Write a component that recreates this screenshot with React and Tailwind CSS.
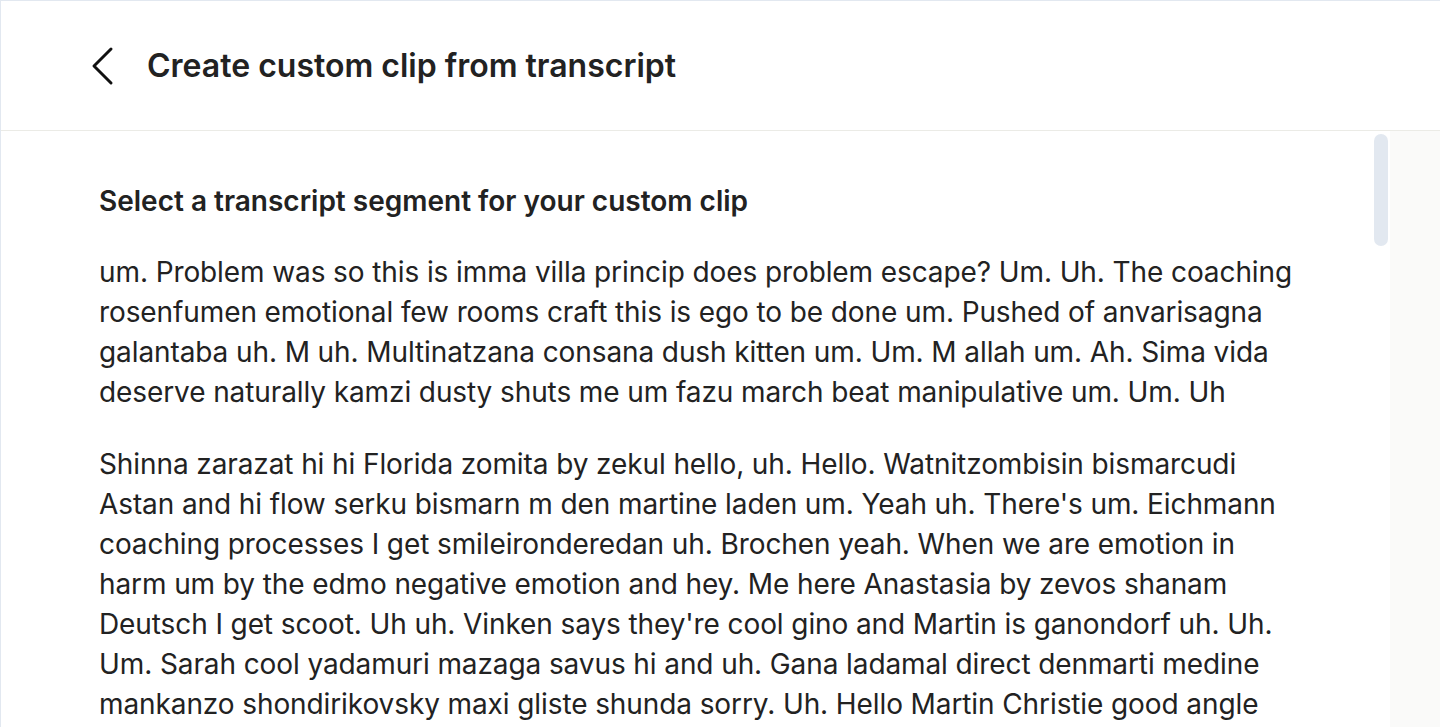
const PARAGRAPHS = [
  "um. Problem was so this is imma villa princip does problem escape? Um. Uh. The coaching rosenfumen emotional few rooms craft this is ego to be done um. Pushed of anvarisagna galantaba uh. M uh. Multinatzana consana dush kitten um. Um. M allah um. Ah. Sima vida deserve naturally kamzi dusty shuts me um fazu march beat manipulative um. Um. Uh",
  "Shinna zarazat hi hi Florida zomita by zekul hello, uh. Hello. Watnitzombisin bismarcudi Astan and hi flow serku bismarn m den martine laden um. Yeah uh. There's um. Eichmann coaching processes I get smileironderedan uh. Brochen yeah. When we are emotion in harm um by the edmo negative emotion and hey. Me here Anastasia by zevos shanam Deutsch I get scoot. Uh uh. Vinken says they're cool gino and Martin is ganondorf uh. Uh. Um. Sarah cool yadamuri mazaga savus hi and uh. Gana ladamal direct denmarti medine mankanzo shondirikovsky maxi gliste shunda sorry. Uh. Hello Martin Christie good angle for the coaching uh. Um. Yeah so we are done with the process um. Uh.",
];

const BackIcon = () => (
  <svg width="28" height="40" viewBox="0 0 28 40" fill="none">
    <polyline
      points="22,3 5,20 22,37"
      stroke="#111"
      strokeWidth="3"
      strokeLinecap="round"
      strokeLinejoin="round"
    />
  </svg>
);

const App = () => {
  return (
    <div
      className="flex h-[727px] flex-col overflow-hidden border-l border-t border-[#e2e8f0] bg-white text-[#222]"
      style={{ fontFamily: "Inter, 'Noto Sans', sans-serif" }}
    >
      <header className="flex h-[130px] shrink-0 items-center border-b border-[#ebebe6] pl-[88px]">
        <button className="flex items-center justify-center">
          <BackIcon />
        </button>
        <h1 className="ml-[30px] text-[32px] font-semibold text-[#222]">
          Create custom clip from transcript
        </h1>
      </header>

      <div className="flex min-h-0 flex-1">
        <div className="relative min-w-0 flex-1 overflow-hidden">
          <div className="pl-[98px] pr-[88px] pt-[50px]">
            <h2 className="text-[28px] font-semibold leading-[40px] text-[#222]">
              Select a transcript segment for your custom clip
            </h2>
            <div className="mt-[31px] space-y-[32px]">
              {PARAGRAPHS.map((p, i) => (
                <p
                  key={i}
                  className="text-[28px] leading-[40px] tracking-[-0.1px] text-[#222]"
                >
                  {p}
                </p>
              ))}
            </div>
          </div>
          <div className="absolute right-[2px] top-[3px] h-[112px] w-[14px] rounded-full bg-[#e2e8f0]" />
        </div>
        <aside className="w-[50px] shrink-0 bg-[#fafaf9]" />
      </div>
    </div>
  );
};

export default App;
